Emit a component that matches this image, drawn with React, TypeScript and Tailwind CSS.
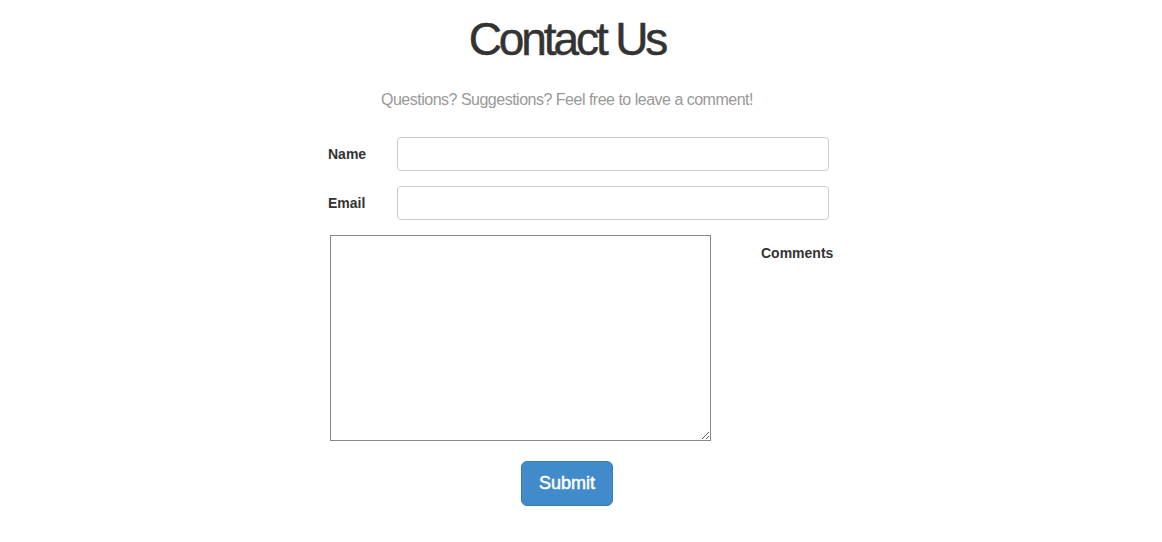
export default function App() {
  const font = { fontFamily: '"Liberation Sans", Arial, Helvetica, sans-serif' };
  return (
    <div className="min-h-screen w-full bg-white text-[#333]" style={font}>
      <div className="ml-[330px] w-[474px] flex flex-col">
        <h1 className="mt-[15px] text-center text-[46px] leading-[48px] tracking-[-3.1px] font-normal text-[#333] [-webkit-text-stroke:0.5px_#333]">
          Contact Us
        </h1>
        <p className="mt-[27px] text-center text-[16px] leading-[20px] tracking-[-0.5px] text-[#999] whitespace-nowrap">
          Questions? Suggestions? Feel free to leave a comment!
        </p>
        <form className="mt-[27px] flex flex-col" onSubmit={(e) => e.preventDefault()}>
          <div className="flex items-center -ml-[2px]">
            <label className="w-[38px] text-right text-[14px] font-bold whitespace-nowrap">Name</label>
            <input
              type="text"
              className="ml-[31px] w-[432px] h-[34px] shrink-0 rounded-[4px] border border-[#ccc] px-3 text-[14px] outline-none"
            />
          </div>
          <div className="mt-[15px] flex items-center -ml-[2px]">
            <label className="w-[37px] text-right text-[14px] font-bold whitespace-nowrap">Email</label>
            <input
              type="email"
              className="ml-[32px] w-[432px] h-[34px] shrink-0 rounded-[4px] border border-[#ccc] px-3 text-[14px] outline-none"
            />
          </div>
          <div className="mt-[15px] flex items-start">
            <textarea className="w-[381px] h-[206px] shrink-0 border border-[#888] outline-none resize" />
            <label className="ml-[50px] mt-[8px] text-[14px] font-bold whitespace-nowrap">Comments</label>
          </div>
          <div className="mt-[20px] flex justify-center">
            <button
              type="submit"
              className="w-[92px] h-[45px] rounded-[6px] border border-[#357ebd] bg-[#428bca] text-white text-[18px] [-webkit-text-stroke:0.5px_white]"
            >
              Submit
            </button>
          </div>
        </form>
      </div>
    </div>
  );
}
